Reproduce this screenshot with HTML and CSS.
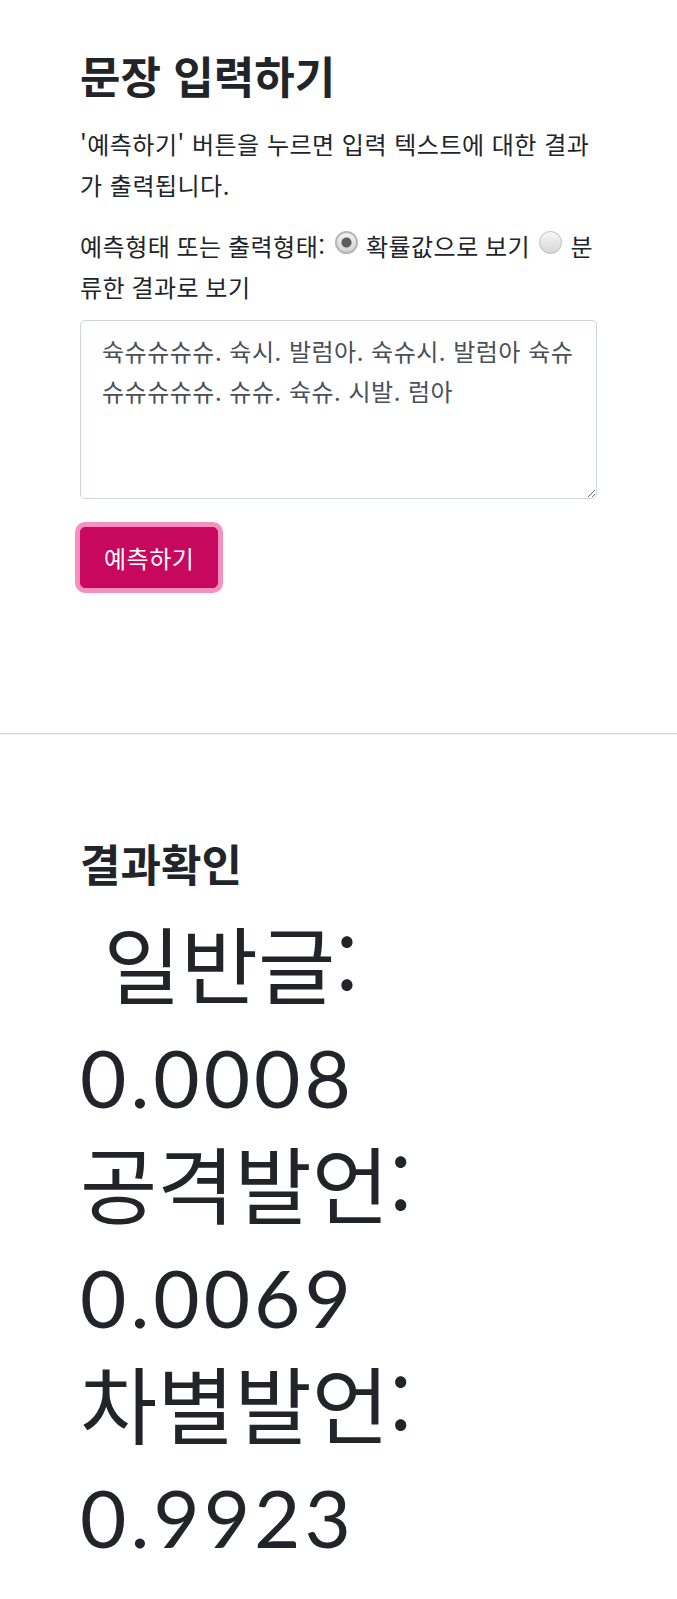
FILE: index.html
```html
<!DOCTYPE html>
<html lang="ko">
<head>
  <meta charset="UTF-8">
  <meta name="viewport" content="width=device-width, initial-scale=1.0">
  <title>문장 입력하기</title>
  <link rel="stylesheet" href="styles.css">
</head>
<body>
  <div class="content input-section">
    <h3 class="title">문장 입력하기</h3>
    <p class="desc">'예측하기' 버튼을 누르면 입력 텍스트에 대한 결과가 출력됩니다.</p>
    <form class="predict-form" onsubmit="return false">
      <div class="mode">예측형태 또는 출력형태: <input type="radio" name="mode" value="prob" checked> 확률값으로 보기 <input type="radio" name="mode" value="label"> 분류한 결과로 보기</div>
      <textarea class="sentence" name="sentence">슉슈슈슈슈. 슉시. 발럼아. 슉슈시. 발럼아 슉슈슈슈슈슈슈. 슈슈. 슉슈. 시발. 럼아</textarea>
      <button type="submit" class="btn-predict">예측하기</button>
    </form>
  </div>

  <hr class="divider">

  <div class="content result-section">
    <h3 class="title">결과확인</h3>
    <div class="scores">
      <div class="score">&nbsp;<span class="label">일반글:</span> <span class="num">0.0008</span></div>
      <div class="score"><span class="label">공격발언:</span> <span class="num">0.0069</span></div>
      <div class="score"><span class="label">차별발언:</span> <span class="num">0.9923</span></div>
    </div>
  </div>
</body>
</html>
```

FILE: styles.css
```css
body {
  margin: 0;
  font-family: "Noto Sans CJK KR", "Noto Sans", sans-serif;
  font-size: 24px;
  line-height: 41px;
  letter-spacing: 0.5px;
  color: #212529;
  background-color: #ffffff;
}
.content {
  padding: 0 80px;
}
.title {
  margin: 0;
  font-size: 44px;
  line-height: 50px;
  font-weight: 700;
  letter-spacing: 0;
}
.input-section {
  padding-top: 50px;
}
.desc {
  margin: 23px 0 0;
}
.mode {
  margin-top: 20px;
  word-spacing: -1px;
}
.mode input[type="radio"] {
  appearance: none;
  -webkit-appearance: none;
  box-sizing: border-box;
  width: 23px;
  height: 23px;
  margin: 6px 2px 0 3px;
  border: 1px solid #bdbdbd;
  border-radius: 50%;
  background: linear-gradient(#f7f7f7, #d6d6d6);
  vertical-align: top;
}
.mode input[type="radio"]:checked {
  border: 2px solid #b5b5b5;
  background: radial-gradient(circle, #5c5c5c 0, #5c5c5c 4.5px, transparent 5.5px),
    linear-gradient(#f4f4f4, #d2d2d2);
}
.sentence {
  display: block;
  box-sizing: border-box;
  width: 100%;
  height: 179px;
  margin: 13px 0 0;
  padding: 10px 21px;
  font: inherit;
  line-height: 40px;
  letter-spacing: 0.5px;
  color: #495057;
  border: 1px solid #ced4da;
  border-radius: 5px;
  resize: vertical;
}
.btn-predict {
  display: block;
  margin-top: 28px;
  padding: 9px 23px;
  font: inherit;
  line-height: 41px;
  letter-spacing: 0.5px;
  color: #ffffff;
  background-color: #c8075f;
  border: 1px solid #c8075f;
  border-radius: 5px;
  box-shadow: 0 0 0 5px #f590c0;
}
.divider {
  margin: 145px 0 0;
  height: 0;
  border: none;
  border-top: 1px solid #d9d9d9;
  border-bottom: 1px solid #efefef;
}
.result-section {
  padding-top: 103px;
}
.scores {
  margin-top: 19px;
  font-size: 84px;
  line-height: 110px;
  font-weight: 400;
  letter-spacing: 0;
}
.num {
  font-family: "Lato", "Noto Sans CJK KR", sans-serif;
  font-size: 80px;
  font-weight: 400;
  letter-spacing: 4px;
  line-height: 1;
}
```
